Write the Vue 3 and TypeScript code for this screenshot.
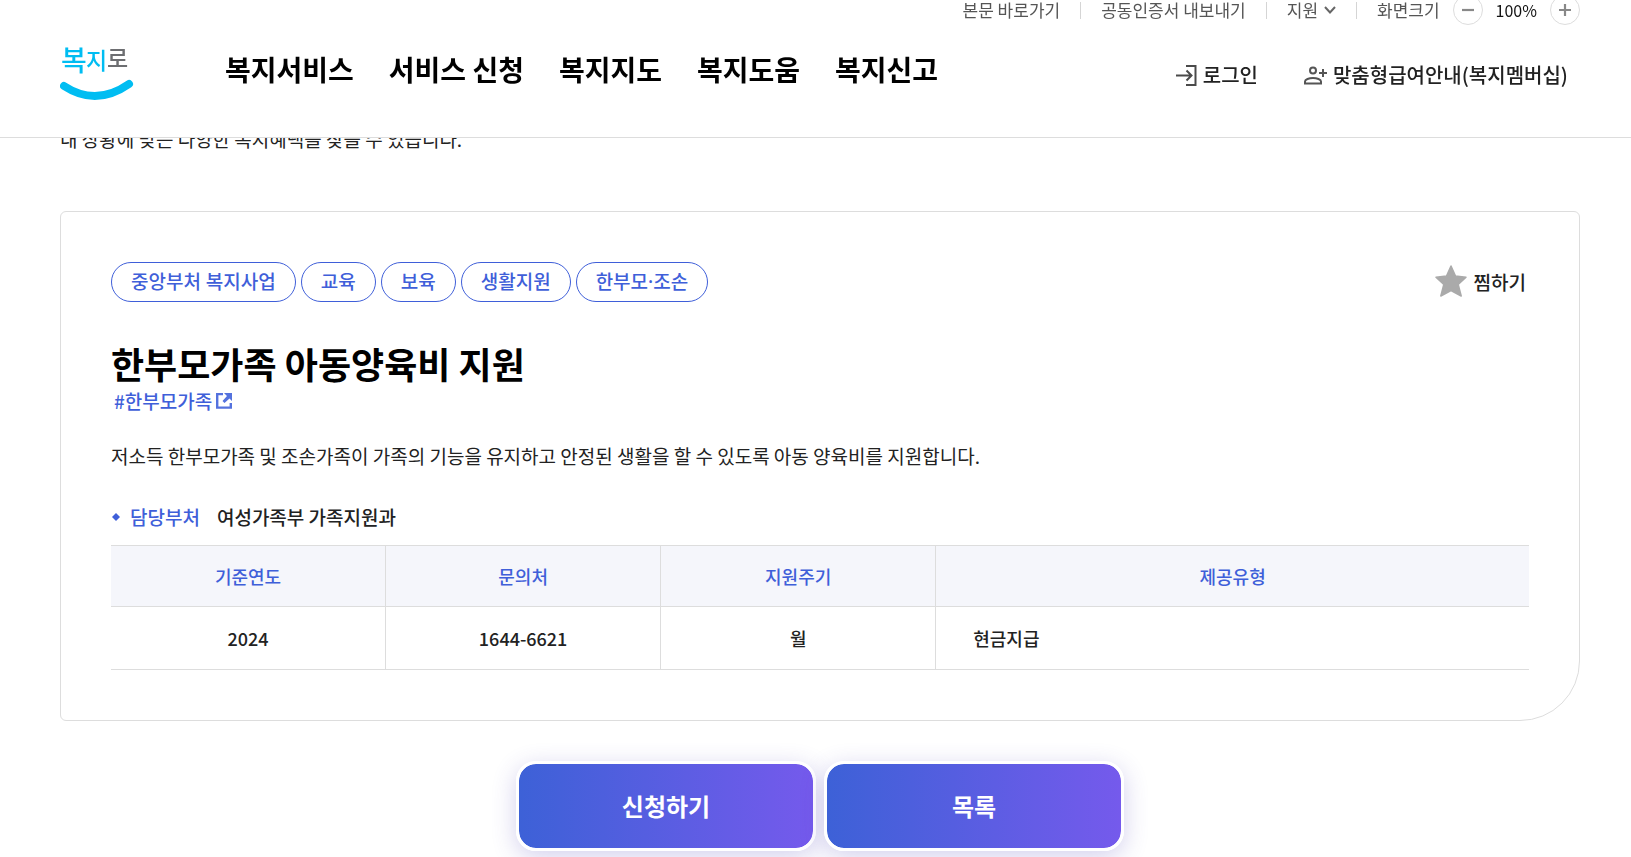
<script setup lang="ts">
import { ref } from 'vue'

interface Column {
  label: string
  value: string
}

const menus: string[] = ['복지서비스', '서비스 신청', '복지지도', '복지도움', '복지신고']
const tags: string[] = ['중앙부처 복지사업', '교육', '보육', '생활지원', '한부모·조손']
const columns: Column[] = [
  { label: '기준연도', value: '2024' },
  { label: '문의처', value: '1644-6621' },
  { label: '지원주기', value: '월' },
  { label: '제공유형', value: '현금지급' },
]

const zoom = ref(100)
const changeZoom = (step: number): void => {
  zoom.value = Math.min(150, Math.max(50, zoom.value + step))
}
</script>

<template>
  <div class="page">
    <header class="header">
      <div class="utility">
        <a href="#content">본문 바로가기</a>
        <span class="bar"></span>
        <a href="#cert">공동인증서 내보내기</a>
        <span class="bar"></span>
        <button type="button" class="support">
          지원
          <svg width="12" height="8" viewBox="0 0 12 8" aria-hidden="true">
            <path d="M1 1l5 5.500L11 1" fill="none" stroke="#666" stroke-width="2" />
          </svg>
        </button>
        <span class="bar"></span>
        <div class="zoom">
          <span>화면크기</span>
          <button type="button" class="round" aria-label="축소" @click="changeZoom(-10)">
            <svg width="12" height="12" viewBox="0 0 12 12"><path d="M0 6h12" stroke="#888" stroke-width="2.200" /></svg>
          </button>
          <span class="percent">{{ zoom }}%</span>
          <button type="button" class="round" aria-label="확대" @click="changeZoom(10)">
            <svg width="12" height="12" viewBox="0 0 12 12"><path d="M0 6h12M6 0v12" stroke="#888" stroke-width="2.200" /></svg>
          </button>
        </div>
      </div>

      <div class="main-bar">
        <a href="#home" class="logo" aria-label="복지로">
          <svg width="74" height="64" viewBox="0 0 74 64">
            <g class="logo-text">
              <text x="1" y="34" font-size="28" fill="#00bdf2">복</text>
              <text x="26" y="32" font-size="23" fill="#00bdf2">지</text>
              <text x="47" y="30" font-size="23" fill="#6d6e71">로</text>
            </g>
            <path d="M4 49Q36 70 69 47" fill="none" stroke="#00bdf2" stroke-width="8" stroke-linecap="round" />
          </svg>
        </a>
        <nav class="menu">
          <a v-for="menu in menus" :key="menu" href="#menu">{{ menu }}</a>
        </nav>
        <div class="account">
          <a href="#login">
            <svg width="21" height="21" viewBox="0 0 21 21" aria-hidden="true">
              <path d="M10 1h9.500v19H10M0 10.500h15M10.500 5.500l5 5-5 5" fill="none" stroke="#4a4a4a" stroke-width="2" />
            </svg>
            로그인
          </a>
          <a href="#membership">
            <svg width="23" height="19" viewBox="0 0 23 19" aria-hidden="true">
              <g fill="none" stroke="#555" stroke-width="2">
                <circle cx="9" cy="4.500" r="3" />
                <path d="M1 17.500v-2c0-2 4-3.500 8-3.500s8 1.500 8 3.500v2zM15 7h8M19 3v8" />
              </g>
            </svg>
            맞춤형급여안내(복지멤버십)
          </a>
        </div>
      </div>
    </header>

    <main id="content" class="content">
      <p class="intro">내 상황에 맞는 다양한 복지혜택을 찾을 수 있습니다.</p>

      <section class="card">
        <div class="card-top">
          <ul class="tags">
            <li v-for="tag in tags" :key="tag">{{ tag }}</li>
          </ul>
          <button type="button" class="favorite">
            <svg width="32" height="34" viewBox="0 0 32 34" aria-hidden="true">
              <path
                d="M16 1l4.500 10 10.500 1.200-7.800 7.300 3 11.500L16 25.500 5.800 31l3-11.500L1 12.200 11.500 11z"
                fill="#aaa" stroke="#aaa" stroke-width="1.500" stroke-linejoin="round"
              />
            </svg>
            찜하기
          </button>
        </div>

        <h1>한부모가족 아동양육비 지원</h1>
        <a href="#single-parent" class="hash">
          #한부모가족
          <svg width="16" height="16" viewBox="0 0 16 16" aria-hidden="true">
            <path d="M7 1H1.200v13.600h13.600V10" fill="none" stroke="#5472de" stroke-width="2.400" />
            <path d="M8 0h8v8l-2.500-2.500L8.500 10 6.500 8l4.500-5z" fill="#5472de" />
          </svg>
        </a>
        <p class="summary">저소득 한부모가족 및 조손가족이 가족의 기능을 유지하고 안정된 생활을 할 수 있도록 아동 양육비를 지원합니다.</p>

        <dl class="dept">
          <dt>
            <svg width="10" height="10" viewBox="0 0 10 10" aria-hidden="true"><path d="M5 1l4 4-4 4-4-4z" fill="#3f5fd9" /></svg>
            담당부처
          </dt>
          <dd>여성가족부 가족지원과</dd>
        </dl>

        <table>
          <thead>
            <tr><th v-for="col in columns" :key="col.label" scope="col">{{ col.label }}</th></tr>
          </thead>
          <tbody>
            <tr><td v-for="col in columns" :key="col.label">{{ col.value }}</td></tr>
          </tbody>
        </table>
      </section>

      <div class="actions">
        <button type="button">신청하기</button>
        <button type="button">목록</button>
      </div>
    </main>
  </div>
</template>

<style>
html {
  overflow: hidden;
}
body {
  margin: 0;
  background: #fff;
}
</style>

<style scoped>
.page {
  font-family: "Noto Sans CJK KR", "Noto Sans", sans-serif;
  font-size: 19px;
  line-height: 30px;
  color: #222;
  height: 100vh;
  overflow: hidden;
}
.page * {
  box-sizing: border-box;
}
a {
  color: inherit;
  text-decoration: none;
}
button {
  margin: 0;
  padding: 0;
  border: 0;
  background: none;
  color: inherit;
  font: inherit;
  cursor: pointer;
}
svg {
  display: block;
  flex: none;
}
.header {
  position: fixed;
  z-index: 1;
  inset: 0 0 auto;
  height: 138px;
  padding: 0 51px 0 60px;
  border-bottom: 1px solid #ddd;
  background: #fff;
}
.utility {
  display: flex;
  align-items: center;
  justify-content: flex-end;
  gap: 20px;
  height: 30px;
  margin-top: -5px;
  font-size: 17px;
  line-height: 20px;
  color: #555;
}
.bar {
  width: 1px;
  height: 17px;
  background: #d5d5d5;
}
.support {
  display: flex;
  align-items: center;
  gap: 6px;
}
.zoom {
  display: flex;
  align-items: center;
  gap: 13px;
}
.percent {
  font-size: 16px;
  color: #111;
}
.round {
  display: flex;
  align-items: center;
  justify-content: center;
  width: 30px;
  height: 30px;
  border: 1px solid #ddd;
  border-radius: 50%;
}
.main-bar {
  display: flex;
  align-items: flex-start;
  padding-top: 12px;
}
.logo-text {
  font-weight: 500;
}
.menu {
  display: flex;
  gap: 35px;
  margin: 12px auto 0 91px;
  font-size: 28px;
  line-height: 40px;
  font-weight: 700;
  color: #000;
}
.account {
  display: flex;
  gap: 46px;
  margin: 23px 12px 0 0;
  font-size: 20px;
  font-weight: 500;
}
.account a {
  display: flex;
  align-items: center;
  gap: 6px;
}
.content {
  padding: 124px 51px 0 60px;
}
.intro {
  margin: 0 0 57px;
}
.card {
  padding: 50px;
  border: 1px solid #ddd;
  border-radius: 6px 6px 60px 6px;
}
.card-top {
  display: flex;
  align-items: center;
  justify-content: space-between;
}
.tags {
  display: flex;
  gap: 5px;
  margin: 0;
  padding: 0;
  list-style: none;
  font-family: "Noto Sans", "Noto Sans CJK KR", sans-serif;
}
.tags li {
  padding: 0 19px;
  border: 1px solid #3f5fd9;
  border-radius: 20px;
  line-height: 38px;
  font-weight: 500;
  color: #3f5fd9;
}
.favorite {
  display: flex;
  align-items: center;
  gap: 7px;
  padding-right: 3px;
  font-weight: 500;
}
h1 {
  margin: 37px 0 0;
  font-size: 36px;
  line-height: 48px;
  font-weight: 700;
  color: #000;
}
.hash {
  display: flex;
  align-items: center;
  gap: 4px;
  width: fit-content;
  margin: -1px 0 0 3px;
  font-weight: 500;
  color: #3f5fd9;
}
.summary {
  margin: 25px 0 31px;
}
.dept {
  display: flex;
  gap: 17px;
  margin: 0 0 13px;
  font-weight: 500;
}
.dept dt {
  display: flex;
  align-items: center;
  gap: 9px;
  color: #3f5fd9;
}
.dept dd {
  margin: 0;
}
table {
  width: 100%;
  table-layout: fixed;
  border-collapse: separate;
  border-spacing: 0;
  border-top: 1px solid #ddd;
  font-size: 18px;
  font-weight: 500;
  text-align: center;
}
th,
td {
  padding: 0;
  border-right: 1px solid #ddd;
  border-bottom: 1px solid #ddd;
  font-weight: 500;
}
th {
  height: 61px;
  background: #f5f6fb;
  color: #3f5fd9;
}
td {
  height: 63px;
}
th:last-child,
td:last-child {
  border-right: 0;
}
th:not(:last-child) {
  width: 19.4%;
}
td:last-child {
  padding-left: 37px;
  text-align: left;
}
.actions {
  display: flex;
  justify-content: center;
  gap: 8px;
  padding: 40px 0;
}
.actions button {
  width: 300px;
  height: 90px;
  border: 3px solid #fff;
  border-radius: 20px;
  background: linear-gradient(90deg, #3d61d7, #755aec) padding-box;
  box-shadow: 0 6px 24px rgba(70, 60, 180, 0.24);
  font-size: 24px;
  font-weight: 700;
  color: #fff;
}
</style>
